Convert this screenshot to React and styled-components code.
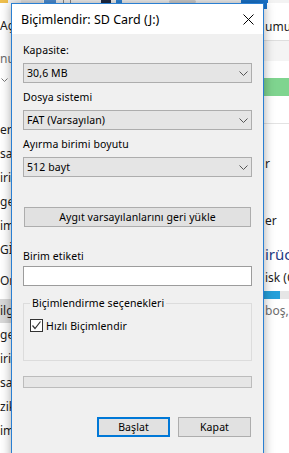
import React from "react";
import styled, { createGlobalStyle } from "styled-components";

const GlobalStyle = createGlobalStyle`
    html, body {
        margin: 0;
        padding: 0;
    }
    body {
        width: 289px;
        height: 453px;
        overflow: hidden;
        background: #ffffff;
        font-family: "Noto Sans", "DejaVu Sans", sans-serif;
        color: #000;
    }
`;

const Screen = styled.div`
    position: relative;
    width: 289px;
    height: 453px;
    overflow: hidden;
    background: #ffffff;
`;

/* explorer window behind the dialog */

const Ribbon = styled.div`
    display: flex;
    height: 3px;
    background: #f3f3f3;
`;

const RibbonChip = styled.span`
    display: block;
    width: ${(p) => p.$w}px;
    margin-left: ${(p) => p.$gap || 0}px;
    background: ${(p) => p.$color};
    border-radius: ${(p) => (p.$round ? "2px" : "0")};
`;

const Panes = styled.div`
    display: grid;
    grid-template-columns: 264px 25px;
`;

const NavPane = styled.div`
    display: flex;
    flex-direction: column;
    overflow: hidden;
    font-size: 12px;
    line-height: 14px;
    color: #1b1b1b;
`;

const NavHead = styled.div`
    margin-top: ${(p) => p.$top}px;
    color: ${(p) => p.$color || "#1b1b1b"};
    white-space: nowrap;
`;

const NavChevron = styled.svg`
    display: block;
    margin-top: 12px;
    margin-left: 1px;
`;

const NavSection = styled.div`
    display: flex;
    flex-direction: column;
    margin-top: ${(p) => p.$top}px;
`;

const NavItem = styled.div`
    height: 24px;
    line-height: 24px;
    white-space: nowrap;
    background: ${(p) => (p.$selected ? "#d9d9d9" : "transparent")};
`;

const DetailPane = styled.div`
    display: flex;
    flex-direction: column;
    overflow: hidden;
    font-size: 12px;
    line-height: 14px;
    color: #1b1b1b;
`;

const AccentStub = styled.div`
    width: 3px;
    height: 6px;
    background: #1a74cc;
`;

const DetailText = styled.div`
    margin-top: ${(p) => p.$top}px;
    padding-left: 1px;
    white-space: nowrap;
    color: ${(p) => p.$color || "#1b1b1b"};
    font-size: ${(p) => p.$size || 12}px;
    line-height: ${(p) => p.$lh || 14}px;
`;

const HeaderBand = styled.div`
    margin-top: 6px;
    height: 20px;
    background: #f4f4f4;
    border-top: 1px solid #dedede;
`;

const StatusBar = styled.div`
    margin-top: 17px;
    height: 18px;
    background: #7fd48f;
`;

const Rule = styled.div`
    margin-top: 27px;
    height: 1px;
    background: #e3e3e3;
`;

const DiskBar = styled.div`
    margin-top: 6px;
    height: 8px;
    display: flex;
    background: #e6e6e6;
`;

const DiskUsed = styled.div`
    width: 16px;
    background: #26a0da;
`;

/* format dialog */

const Window = styled.div`
    position: absolute;
    left: 11px;
    top: 3px;
    width: 253px;
    height: 470px;
    box-sizing: border-box;
    border: 1px solid #2a7fd2;
    background: #f0f0f0;
    box-shadow: 0 0 10px rgba(0, 0, 0, 0.35);
    display: flex;
    flex-direction: column;
`;

const TitleBar = styled.div`
    display: flex;
    align-items: center;
    justify-content: space-between;
    height: 30px;
    padding-left: 9px;
    background: #ffffff;
`;

const Title = styled.div`
    font-size: 12.5px;
    color: #000;
    white-space: nowrap;
`;

const CloseButton = styled.div`
    width: 30px;
    height: 30px;
    display: flex;
    align-items: center;
    justify-content: center;
`;

const Body = styled.div`
    display: flex;
    flex-direction: column;
    padding: 10px 11px 0;
    font-size: 10.5px;
    letter-spacing: 0.1px;
`;

const FieldLabel = styled.div`
    height: 13px;
    line-height: 13px;
    margin-top: ${(p) => p.$top || 0}px;
    white-space: nowrap;
`;

const Combo = styled.div`
    display: flex;
    align-items: center;
    justify-content: space-between;
    height: 20px;
    box-sizing: border-box;
    margin: 6px 0 8px;
    padding: 0 3px;
    border: 1px solid #adadad;
    background: #e5e5e5;
`;

const Chevron = styled.svg`
    display: block;
`;

const WideButton = styled.div`
    height: 20px;
    box-sizing: border-box;
    margin: 22px 1px 0;
    border: 1px solid #adadad;
    background: #e1e1e1;
    display: flex;
    align-items: center;
    justify-content: center;
    white-space: nowrap;
`;

const TextBox = styled.div`
    height: 20px;
    box-sizing: border-box;
    margin-top: 3px;
    border: 1px solid #9c9c9c;
    background: #ffffff;
`;

const GroupBox = styled.fieldset`
    margin: 11px 0 0;
    padding: 0 0 28px 6px;
    border: 1px solid #dcdcdc;
    min-width: 0;
`;

const Legend = styled.legend`
    padding: 0 2px;
    height: 13px;
    line-height: 13px;
    font-size: inherit;
`;

const CheckRow = styled.div`
    display: flex;
    align-items: center;
    gap: 3px;
    margin-top: 9px;
    height: 13px;
`;

const Progress = styled.div`
    margin-top: 15px;
    height: 12px;
    box-sizing: border-box;
    border: 1px solid #bcbcbc;
    background: #e6e6e6;
`;

const ButtonRow = styled.div`
    display: flex;
    justify-content: flex-end;
    gap: 8px;
    margin: 29px 1px 0 0;
`;

const DialogButton = styled.div`
    width: 73px;
    height: 20px;
    box-sizing: border-box;
    border: ${(p) => (p.$primary ? "2px solid #0078d7" : "1px solid #adadad")};
    background: #e1e1e1;
    display: flex;
    align-items: center;
    justify-content: center;
`;

function ComboBox({ value }) {
    return (
        <Combo>
            <span>{value}</span>
            <Chevron width="9" height="5" viewBox="0 0 9 5">
                <polyline points="0.5,0.5 4.5,4.5 8.5,0.5" fill="none" stroke="#555" strokeWidth="1" />
            </Chevron>
        </Combo>
    );
}

const navTop = ["erişim", "saüstü", "irilenler", "geler", "imler", "GİS"];
const navBottom = ["geler", "irilenler", "saüstü", "zik", "imler"];

export default function App() {
    return (
        <Screen>
            <GlobalStyle />
            <Ribbon>
                <RibbonChip $w={8} $color="#efbf4c" />
                <RibbonChip $w={22} $gap={13} $color="#e4e4e4" />
                <RibbonChip $w={12} $gap={1} $color="#4d8fd6" />
                <RibbonChip $w={1} $gap={7} $color="#8a8a8a" />
                <RibbonChip $w={1} $gap={6} $color="#8a8a8a" />
                <RibbonChip $w={10} $gap={30} $color="#1f2b45" />
                <RibbonChip $w={6} $gap={5} $color="#2f86d8" />
                <RibbonChip $w={27} $gap={47} $color="#cfcfcf" $round />
                <RibbonChip $w={27} $gap={45} $color="#1a74cc" />
            </Ribbon>
            <Panes>
                <NavPane>
                    <NavHead $top={16}>Aç</NavHead>
                    <NavHead $top={19} $color="#6d6d6d">nu</NavHead>
                    <NavChevron width="7" height="5" viewBox="0 0 7 5">
                        <polyline points="0.5,0.5 3.5,3.5 6.5,0.5" fill="none" stroke="#777" strokeWidth="1" />
                    </NavChevron>
                    <NavSection $top={35}>
                        {navTop.map((t, i) => (
                            <NavItem key={i}>{t}</NavItem>
                        ))}
                    </NavSection>
                    <NavSection $top={7}>
                        <NavItem>OriginPro</NavItem>
                    </NavSection>
                    <NavSection $top={6}>
                        <NavItem $selected>ilgisayar</NavItem>
                        {navBottom.map((t, i) => (
                            <NavItem key={i}>{t}</NavItem>
                        ))}
                    </NavSection>
                </NavPane>
                <DetailPane>
                    <AccentStub />
                    <DetailText $top={11}>umu</DetailText>
                    <HeaderBand />
                    <StatusBar />
                    <Rule />
                    <DetailText $top={33}>r</DetailText>
                    <DetailText $top={43}>er</DetailText>
                    <DetailText $top={17} $size={15} $lh={18} $color="#1e3a84">irücü</DetailText>
                    <DetailText $top={8}>isk (C</DetailText>
                    <DiskBar>
                        <DiskUsed />
                    </DiskBar>
                    <DetailText $top={5} $color="#6d6d6d">boş,</DetailText>
                </DetailPane>
            </Panes>

            <Window>
                <TitleBar>
                    <Title>Biçimlendir: SD Card (J:)</Title>
                    <CloseButton>
                        <svg width="11" height="11" viewBox="0 0 11 11">
                            <path d="M0.5 0.5 L10.5 10.5 M10.5 0.5 L0.5 10.5" stroke="#000" strokeWidth="1" />
                        </svg>
                    </CloseButton>
                </TitleBar>
                <Body>
                    <FieldLabel>Kapasite:</FieldLabel>
                    <ComboBox value="30,6 MB" />
                    <FieldLabel>Dosya sistemi</FieldLabel>
                    <ComboBox value="FAT (Varsayılan)" />
                    <FieldLabel>Ayırma birimi boyutu</FieldLabel>
                    <ComboBox value="512 bayt" />
                    <WideButton>Aygıt varsayılanlarını geri yükle</WideButton>
                    <FieldLabel $top={23}>Birim etiketi</FieldLabel>
                    <TextBox />
                    <GroupBox>
                        <Legend>Biçimlendirme seçenekleri</Legend>
                        <CheckRow>
                            <svg width="13" height="13" viewBox="0 0 13 13">
                                <rect x="0.5" y="0.5" width="12" height="12" fill="#fff" stroke="#333" />
                                <path d="M2.5 6.5 L5 9.5 L10.5 2.5" fill="none" stroke="#333" strokeWidth="1.2" />
                            </svg>
                            <span>Hızlı Biçimlendir</span>
                        </CheckRow>
                    </GroupBox>
                    <Progress />
                    <ButtonRow>
                        <DialogButton $primary>Başlat</DialogButton>
                        <DialogButton>Kapat</DialogButton>
                    </ButtonRow>
                </Body>
            </Window>
        </Screen>
    );
}
